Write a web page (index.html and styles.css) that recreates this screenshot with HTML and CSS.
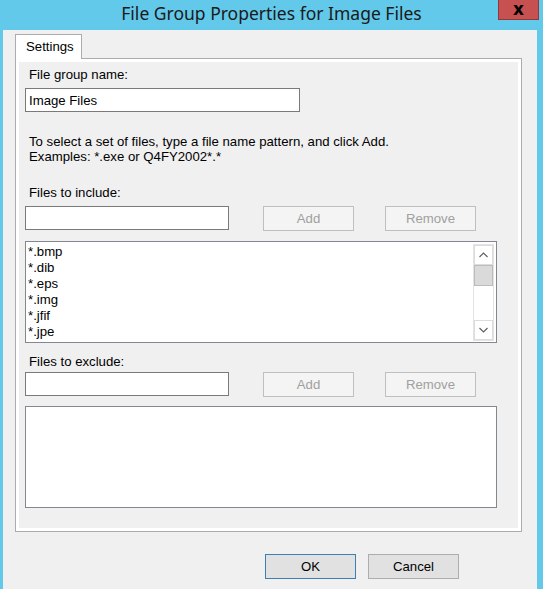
FILE: index.html
```html
<!DOCTYPE html>
<html lang="en">
<head>
  <meta charset="UTF-8" />
  <meta name="viewport" content="width=device-width, initial-scale=1" />
  <title>File Group Properties for Image Files</title>
  <link rel="stylesheet" href="styles.css">
</head>
<body>
  <div class="window">
    <div class="titlebar">
      <span></span>
      <div class="title">File Group Properties for Image Files</div>
      <button class="close-btn">x</button>
    </div>

    <div class="client">
      <div class="tabs">
        <div class="tab">Settings</div>
      </div>

      <div class="tab-panel">
        <div class="tab-page">
          <div class="label first">File group name:</div>
          <input class="textbox name-box" type="text" value="Image Files">

          <p class="hint">To select a set of files, type a file name pattern, and click Add.<br>Examples: *.exe or Q4FY2002*.*</p>

          <div class="label">Files to include:</div>
          <div class="entry-row">
            <input class="textbox pattern-box" type="text">
            <button class="btn add" disabled>Add</button>
            <button class="btn remove" disabled>Remove</button>
          </div>
          <div class="listbox">
            <ul class="items">
              <li>*.bmp</li>
              <li>*.dib</li>
              <li>*.eps</li>
              <li>*.img</li>
              <li>*.jfif</li>
              <li>*.jpe</li>
            </ul>
            <div class="scrollbar">
              <div class="sb-arrow">
                <svg width="9" height="6" viewBox="0 0 9 6"><polyline points="0.5,5 4.5,1 8.5,5" fill="none" stroke="#606060" stroke-width="1.2"/></svg>
              </div>
              <div class="sb-thumb"></div>
              <div class="sb-track"></div>
              <div class="sb-arrow">
                <svg width="9" height="6" viewBox="0 0 9 6"><polyline points="0.5,1 4.5,5 8.5,1" fill="none" stroke="#606060" stroke-width="1.2"/></svg>
              </div>
            </div>
          </div>

          <div class="label exclude">Files to exclude:</div>
          <div class="entry-row exclude-row">
            <input class="textbox pattern-box" type="text">
            <button class="btn add" disabled>Add</button>
            <button class="btn remove" disabled>Remove</button>
          </div>
          <div class="listbox empty"></div>
        </div>
      </div>

      <div class="dialog-buttons">
        <button class="btn ok">OK</button>
        <button class="btn cancel">Cancel</button>
      </div>
    </div>
  </div>
</body>
</html>
```

FILE: styles.css
```css
* {
  box-sizing: border-box;
}
body {
  margin: 0;
  background-color: #62c9ea;
  font-family: "Liberation Sans", Arial, sans-serif;
  font-size: 13.2px;
  color: #000;
}
.window {
  width: 543px;
  height: 589px;
  padding: 0 6px 0 3px;
  background-color: #62c9ea;
  overflow: hidden;
}
.titlebar {
  display: grid;
  grid-template-columns: 1fr auto 1fr;
  align-items: start;
  height: 30px;
  margin: 0 -6px 0 -3px;
}
.title {
  font-family: "Noto Sans", sans-serif;
  font-size: 17.5px;
  color: #1a1a1a;
  padding-top: 1px;
  line-height: 24px;
}
.close-btn {
  justify-self: end;
  width: 41px;
  height: 20px;
  margin-right: 4px;
  padding: 0;
  background-color: #c75050;
  border: 1px solid #8e3a3a;
  border-top: none;
  font-family: "DejaVu Sans", sans-serif;
  font-weight: bold;
  font-size: 17px;
  line-height: 15px;
  color: #000;
}
.client {
  height: 559px;
  background-color: #f0f0f0;
  padding-top: 4px;
}
.tabs {
  display: flex;
  padding-left: 12px;
}
.tab {
  width: 67px;
  height: 25px;
  margin-bottom: -1px;
  padding: 4px 0 0 10px;
  background-color: #fff;
  border: 1px solid #acacac;
  border-bottom: none;
  line-height: 16px;
  position: relative;
  z-index: 1;
}
.tab-panel {
  height: 474px;
  margin: 0 15px 0 12px;
  padding: 3px;
  background-color: #fff;
  border: 1px solid #acacac;
}
.tab-page {
  height: 100%;
  background-color: #f0f0f0;
  padding: 5px 0 0 6px;
}
.label {
  line-height: 15px;
  padding-left: 4px;
}
.label.exclude {
  margin-top: 11px;
}
.textbox {
  display: block;
  height: 24px;
  margin: 6px 0 0 0;
  padding: 0 3px;
  border: 1px solid #7a7a7a;
  background-color: #fff;
  font-family: inherit;
  font-size: 13.2px;
  color: #000;
  outline: none;
}
.name-box {
  width: 275px;
}
.hint {
  margin: 22px 0 21px 0;
  padding-left: 4px;
  line-height: 15px;
}
.entry-row {
  display: flex;
  align-items: flex-start;
  margin-top: 6px;
}
.entry-row.exclude-row {
  margin-top: 3px;
}
.entry-row .textbox {
  margin: 0;
}
.pattern-box {
  width: 204px;
}
.btn {
  height: 25px;
  padding: 0;
  font-family: inherit;
  font-size: 13.2px;
}
.btn.add,
.btn.remove {
  width: 91px;
  background-color: #f4f4f4;
  border: 1px solid #bfbfbf;
  color: #a0a0a0;
}
.btn.add {
  margin-left: 34px;
}
.btn.remove {
  margin-left: 31px;
}
.listbox {
  display: flex;
  width: 472px;
  height: 102px;
  margin-top: 10px;
  padding: 2px 2px 1px 1px;
  background-color: #fff;
  border: 1px solid #828790;
}
.listbox.empty {
  margin-top: 9px;
}
.items {
  flex: 1;
  list-style: none;
  margin: 0;
  padding: 0 0 0 1px;
}
.items li {
  line-height: 16px;
}
.scrollbar {
  display: flex;
  flex-direction: column;
  width: 21px;
  border: 1px solid #e3e3e3;
}
.sb-arrow {
  height: 20px;
  display: flex;
  align-items: center;
  justify-content: center;
  border: 1px solid #dcdcdc;
  background-color: #fff;
}
.sb-thumb {
  height: 21px;
  background-color: #dadada;
  border: 1px solid #bcbcbc;
}
.sb-track {
  flex: 1;
  background-color: #fff;
}
.dialog-buttons {
  display: flex;
  justify-content: flex-end;
  gap: 12px;
  margin: 22px 78px 0 0;
}
.btn.ok,
.btn.cancel {
  width: 91px;
  background-color: #e1e1e1;
  color: #000;
}
.btn.ok {
  border: 1px solid #3c7fb1;
}
.btn.cancel {
  border: 1px solid #adadad;
}
```
